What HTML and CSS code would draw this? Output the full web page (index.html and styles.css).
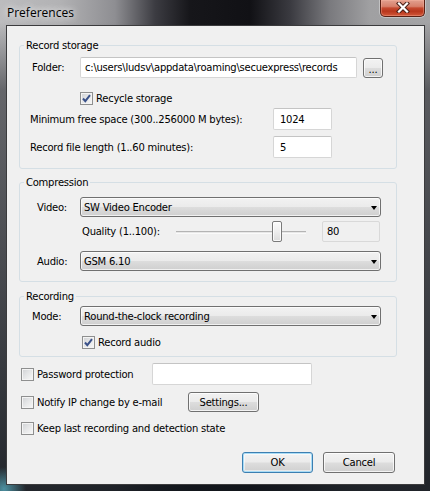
FILE: index.html
```html
<!DOCTYPE html>
<html>
<head>
<meta charset="utf-8">
<title>Preferences</title>
<link rel="stylesheet" href="styles.css">
</head>
<body>
<div class="window">
  <div class="titlebar">
    <span class="title">Preferences</span>
    <div class="close">
      <svg width="14" height="11" viewBox="0 0 14 11">
        <path d="M3 1.5 L11 9.5 M11 1.5 L3 9.5" stroke="#4a2018" stroke-width="4.2" stroke-linecap="square" fill="none"/>
        <path d="M3 1.5 L11 9.5 M11 1.5 L3 9.5" stroke="#ffffff" stroke-width="2.2" stroke-linecap="square" fill="none"/>
      </svg>
    </div>
  </div>
  <div class="client">
    <fieldset class="group g-storage">
      <legend>Record storage</legend>
      <div class="gbody">
        <div class="row r-folder">
          <span class="lbl l-folder">Folder:</span>
          <div class="tb tb-folder">c:\users\ludsv\appdata\roaming\secuexpress\records</div>
          <div class="btn btn-browse">...</div>
        </div>
        <div class="row r-recycle">
          <span class="cb checked"><svg width="11" height="11" viewBox="0 0 11 11"><path d="M2 5.5 L4.3 8.2 L9 2.2" stroke="#3a5189" stroke-width="2" fill="none"/></svg></span>
          <span class="cbl">Recycle storage</span>
        </div>
        <div class="row r-num r-min">
          <span class="lbl l-num">Minimum free space (300..256000 M bytes):</span>
          <div class="tb tb-num">1024</div>
        </div>
        <div class="row r-num r-len">
          <span class="lbl l-num">Record file length (1..60 minutes):</span>
          <div class="tb tb-num">5</div>
        </div>
      </div>
    </fieldset>

    <fieldset class="group g-compression">
      <legend>Compression</legend>
      <div class="gbody">
        <div class="row r-sel">
          <span class="lbl l-media">Video:</span>
          <div class="select"><span>SW Video Encoder</span><span class="arrow"></span></div>
        </div>
        <div class="row r-quality">
          <span class="lbl l-quality">Quality (1..100):</span>
          <div class="slider"><span class="thumb" style="margin-left:96px"></span></div>
          <div class="tb tb-value">80</div>
        </div>
        <div class="row r-sel r-audio">
          <span class="lbl l-media">Audio:</span>
          <div class="select"><span>GSM 6.10</span><span class="arrow"></span></div>
        </div>
      </div>
    </fieldset>

    <fieldset class="group g-recording">
      <legend>Recording</legend>
      <div class="gbody">
        <div class="row r-sel">
          <span class="lbl l-folder">Mode:</span>
          <div class="select"><span>Round-the-clock recording</span><span class="arrow"></span></div>
        </div>
        <div class="row r-audiocb">
          <span class="cb checked"><svg width="11" height="11" viewBox="0 0 11 11"><path d="M2 5.5 L4.3 8.2 L9 2.2" stroke="#3a5189" stroke-width="2" fill="none"/></svg></span>
          <span class="cbl">Record audio</span>
        </div>
      </div>
    </fieldset>

    <div class="options">
      <div class="row r-pass">
        <div class="cbwrap w-pass"><span class="cb"></span><span class="cbl">Password protection</span></div>
        <div class="tb tb-pass"></div>
      </div>
      <div class="row r-notify">
        <div class="cbwrap w-notify"><span class="cb"></span><span class="cbl">Notify IP change by e-mail</span></div>
        <div class="btn btn-settings">Settings...</div>
      </div>
      <div class="row r-keep">
        <div class="cbwrap"><span class="cb"></span><span class="cbl">Keep last recording and detection state</span></div>
      </div>
    </div>

    <div class="buttons">
      <div class="btn btn-ok">OK</div>
      <div class="btn btn-cancel">Cancel</div>
    </div>
  </div>
</div>
</body>
</html>
```

FILE: styles.css
```css
html, body {
  margin: 0;
  padding: 0;
}

body {
  width: 430px;
  height: 491px;
  overflow: hidden;
}

.window {
  width: 430px;
  height: 491px;
  box-sizing: border-box;
  padding: 0 5px 6px 6px;
  display: flex;
  flex-direction: column;
  font-family: "DejaVu Sans", "Liberation Sans", sans-serif;
  font-size: 10px;
  letter-spacing: -0.24px;
  color: #000;
  background:
    radial-gradient(circle at 4px 489px, rgba(90, 180, 200, 0.75), rgba(90, 180, 200, 0) 22px),
    linear-gradient(to bottom, rgba(20, 22, 26, 0) 0, rgba(20, 22, 26, 0) 22px, rgba(30, 32, 38, 0.55) 90px, rgba(18, 22, 28, 0.9) 100%),
    linear-gradient(to right, #bcbcbe 0, #b2b2b4 60px, #8e8e92 115px, #3c3c42 155px, #16161a 190px, #111115 250px, #3a3a40 290px, #7a7a7e 330px, #a0a0a2 370px, #a4a4a6 430px);
}

.titlebar {
  height: 25px;
  flex: none;
  display: flex;
  justify-content: space-between;
  align-items: flex-start;
}

.title {
  margin: 5px 0 0 1px;
  font-family: "Open Sans", "Noto Sans", sans-serif;
  font-size: 12px;
  line-height: 15px;
  letter-spacing: 0;
  color: #000;
  text-shadow: 0 0 6px rgba(255, 255, 255, 0.9), 0 0 10px rgba(255, 255, 255, 0.6);
}

.close {
  width: 45px;
  height: 17px;
  box-sizing: border-box;
  border: 1px solid #5a2014;
  border-top: none;
  border-radius: 0 0 5px 5px;
  background: linear-gradient(to bottom, #e2a08f 0%, #d7806b 40%, #c54a30 50%, #b8361c 70%, #d2583a 100%);
  box-shadow: 0 0 0 1px rgba(255, 255, 255, 0.35), inset 0 0 0 1px rgba(255, 190, 170, 0.35);
  display: flex;
  align-items: center;
  justify-content: center;
}

.close svg {
  display: block;
  margin-top: -1px;
}

.client {
  flex: 1;
  box-sizing: border-box;
  border: 1px solid #3b3b3d;
  background: #f0f0f0;
  padding: 13px 27px 0 12px;
  display: flex;
  flex-direction: column;
}

.group {
  margin: 0;
  padding: 0;
  min-width: 0;
  border: 1px solid #d5dfe5;
  border-radius: 3px;
}

.group legend {
  padding: 0 2px;
  margin-left: 4px;
  line-height: 13px;
  font-size: 10px;
}

.g-compression {
  margin-top: 7px;
}

.g-recording {
  margin-top: 8px;
}

.gbody {
  display: flex;
  flex-direction: column;
}

.g-storage .gbody {
  padding: 5px 0 10px 0;
}

.g-compression .gbody {
  padding: 8px 0 10px 0;
}

.g-recording .gbody {
  padding: 3px 0 7px 0;
}

.row {
  display: flex;
  align-items: center;
}

.lbl {
  flex: none;
  white-space: nowrap;
}

/* Record storage */
.r-folder {
  height: 21px;
}

.l-folder {
  margin-left: 12px;
  width: 48px;
}

.tb {
  box-sizing: border-box;
  border: 1px solid #d6d6d6;
  border-top-color: #c4c4c4;
  border-radius: 2px;
  background: #fff;
  display: flex;
  align-items: center;
  white-space: nowrap;
  overflow: hidden;
}

.tb-folder {
  width: 277px;
  height: 21px;
  padding-left: 4px;
}

.btn {
  box-sizing: border-box;
  border: 1px solid #707070;
  border-radius: 3px;
  background: linear-gradient(to bottom, #f2f2f2 0%, #ebebeb 49%, #dddddd 51%, #cfcfcf 100%);
  box-shadow: inset 0 0 0 1px rgba(255, 255, 255, 0.75);
  display: flex;
  align-items: center;
  justify-content: center;
  white-space: nowrap;
}

.btn-browse {
  width: 20px;
  height: 20px;
  margin-left: 6px;
  padding-top: 3px;
}

.r-recycle {
  margin-top: 14px;
  height: 13px;
  padding-left: 60px;
}

.cb {
  flex: none;
  width: 13px;
  height: 13px;
  box-sizing: border-box;
  border: 1px solid #8e8f8f;
  background: linear-gradient(135deg, #cfd1d4 0%, #e6e7e8 50%, #f8f8f8 100%);
  box-shadow: inset 0 0 0 1px #f4f4f4;
  display: flex;
  align-items: center;
  justify-content: center;
}

.cb svg {
  display: block;
}

.cbl {
  margin-left: 3px;
  white-space: nowrap;
}

.r-num {
  height: 22px;
}

.r-min {
  margin-top: 3px;
}

.r-len {
  margin-top: 6px;
}

.l-num {
  margin-left: 10px;
  width: 243px;
}

.tb-num {
  width: 59px;
  height: 22px;
  padding-left: 6px;
}

/* Compression */
.r-sel {
  height: 20px;
}

.l-media {
  margin-left: 17px;
  width: 43px;
}

.select {
  width: 301px;
  height: 20px;
  box-sizing: border-box;
  border: 1px solid #707070;
  border-radius: 3px;
  background: linear-gradient(to bottom, #f2f2f2 0%, #ebebeb 49%, #dddddd 51%, #cfcfcf 100%);
  box-shadow: inset 0 0 0 1px rgba(255, 255, 255, 0.7);
  padding: 0 3px 0 3px;
  display: flex;
  align-items: center;
  justify-content: space-between;
  white-space: nowrap;
}

.arrow {
  width: 0;
  height: 0;
  border-left: 3.5px solid transparent;
  border-right: 3.5px solid transparent;
  border-top: 4px solid #000;
  margin-top: 1px;
}

.r-quality {
  margin-top: 4px;
  height: 21px;
}

.l-quality {
  margin-left: 62px;
  width: 94px;
}

.slider {
  width: 130px;
  height: 21px;
  display: flex;
  align-items: center;
  background:
    linear-gradient(to bottom, #b4b4b4 0, #b4b4b4 1px, #e7e7e7 1px, #e7e7e7 2px, #fafafa 2px, #fafafa 3px) left 10px / 100% 3px no-repeat;
}

.thumb {
  width: 10px;
  height: 21px;
  box-sizing: border-box;
  border: 1px solid #7a7a7a;
  border-radius: 2px;
  background: linear-gradient(to bottom, #fbfbfb 0%, #eeeeee 50%, #dcdcdc 100%);
  box-shadow: inset 0 0 0 1px rgba(255, 255, 255, 0.8);
}

.tb-value {
  width: 58px;
  height: 21px;
  margin-left: 16px;
  padding-left: 4px;
  background: #f0f0f0;
  border-color: #d9d9d9;
}

.r-audio {
  margin-top: 9px;
}

/* Recording */
.r-audiocb {
  margin-top: 10px;
  height: 13px;
  padding-left: 62px;
}

/* Options */
.options {
  margin-top: 6px;
  padding-left: 2px;
  display: flex;
  flex-direction: column;
}

.cbwrap {
  display: flex;
  align-items: center;
  flex: none;
}

.r-pass {
  height: 22px;
}

.w-pass {
  width: 131px;
}

.tb-pass {
  width: 160px;
  height: 22px;
}

.r-notify {
  margin-top: 7px;
  height: 20px;
}

.w-notify {
  width: 167px;
}

.btn-settings {
  width: 71px;
  height: 20px;
}

.r-keep {
  margin-top: 10px;
  height: 13px;
}

.buttons {
  margin-top: 17px;
  margin-right: 2px;
  display: flex;
  justify-content: flex-end;
  gap: 10px;
}

.btn-ok,
.btn-cancel {
  height: 21px;
}

.btn-ok {
  width: 71px;
  border-color: #3c7fb1;
  box-shadow: inset 0 0 0 1px #a9dcf6, inset 0 0 0 2px rgba(255, 255, 255, 0.5);
}

.btn-cancel {
  width: 72px;
}
```
